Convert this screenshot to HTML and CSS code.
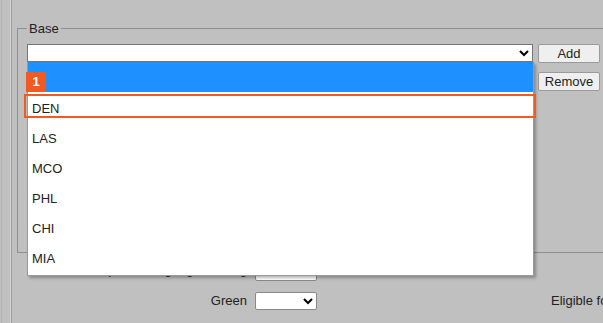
FILE: index.html
```html
<!DOCTYPE html>
<html lang="en">
<head>
    <meta charset="UTF-8">
    <title>Base Assignment</title>
    <link rel="stylesheet" href="styles.css">
</head>
<body>
    <div class="shell">
        <div class="page">
            <div class="panel">
                <fieldset class="base-box">
                    <legend>Base</legend>
                    <div class="base-row">
                        <div class="picker">
                            <select class="base-select">
                                <option></option>
                            </select>
                            <!-- open dropdown list -->
                            <div class="menu">
                                <div class="menu-item selected"></div>
                                <div class="menu-item">DEN</div>
                                <div class="menu-item">LAS</div>
                                <div class="menu-item">MCO</div>
                                <div class="menu-item">PHL</div>
                                <div class="menu-item">CHI</div>
                                <div class="menu-item">MIA</div>
                                <div class="step-badge">1</div>
                                <div class="step-outline"></div>
                            </div>
                        </div>
                        <div class="base-buttons">
                            <button class="btn">Add</button>
                            <button class="btn">Remove</button>
                        </div>
                    </div>
                </fieldset>

                <div class="form-grid">
                    <label class="form-label tucked">Spoken language training</label>
                    <input class="form-input" type="text">
                    <span></span>
                    <span></span>

                    <label class="form-label">Green</label>
                    <select class="form-select">
                        <option></option>
                    </select>
                    <span></span>
                    <label class="form-label left">Eligible for rehire</label>
                </div>
            </div>
        </div>
    </div>
</body>
</html>
```

FILE: styles.css
```css
html, body {
    margin: 0;
    padding: 0;
}
body {
    width: 603px;
    height: 323px;
    overflow: hidden;
    background: #c0c0c0;
    font-family: "Liberation Sans", Arial, sans-serif;
    font-size: 13px;
    color: #222;
}
.shell {
    margin-left: 1px;
    height: 323px;
    border-left: 1px solid #b2b2b2;
}
.page {
    margin-left: 8px;
    height: 323px;
    border-left: 1px solid #d6d6d6;
}
.panel {
    height: 323px;
    border-left: 1px solid #9c9c9c;
    padding: 21px 0 0 5px;
    box-sizing: border-box;
    overflow: hidden;
}
.base-box {
    margin: 0;
    width: 640px;
    height: 232px;
    box-sizing: border-box;
    border: 1px solid #8f8f8f;
    padding: 8px 0 0 9px;
}
.base-box legend {
    padding: 0 2px;
    margin-left: 0;
    font-size: 13px;
    color: #222;
}
.base-row {
    display: flex;
    align-items: flex-start;
    gap: 5px;
}
.picker {
    position: relative;
    width: 506px;
}
.base-select {
    display: block;
    width: 506px;
    height: 18px;
    margin: 0;
    font-family: inherit;
    font-size: 13px;
    background: #fff;
}
.menu {
    position: absolute;
    top: 100%;
    left: 0;
    width: 505px;
    height: 213px;
    background: #fff;
    border: 1px solid #9a9a9a;
    border-top: 0;
    box-shadow: 2px 2px 3px rgba(0, 0, 0, 0.3);
    z-index: 5;
}
.menu-item {
    height: 30px;
    box-sizing: border-box;
    padding: 4px 0 0 4px;
    line-height: 26px;
    color: #222;
}
.menu-item.selected {
    background: #1e90ff;
}
.step-badge {
    position: absolute;
    left: -2px;
    top: 10px;
    width: 20px;
    height: 20px;
    line-height: 20px;
    text-align: center;
    background: #f15a22;
    color: #fff;
    font-weight: 700;
    font-size: 13px;
}
.step-outline {
    position: absolute;
    left: -4px;
    top: 32px;
    width: 512px;
    height: 24px;
    box-sizing: border-box;
    border: 2px solid #f15a22;
}
.base-buttons {
    display: flex;
    flex-direction: column;
    gap: 9px;
}
.btn {
    width: 62px;
    height: 19px;
    padding: 0;
    font-family: inherit;
    font-size: 13px;
    color: #222;
    background: #efefef;
    border: 1px solid #9a9a9a;
    border-radius: 2px;
}
.form-grid {
    display: grid;
    grid-template-columns: 230px 62px 218px 60px;
    column-gap: 8px;
    row-gap: 11px;
    margin-top: 11px;
    white-space: nowrap;
}
.form-label {
    text-align: right;
    line-height: 17px;
}
.form-label.tucked {
    line-height: 12px;
}
.form-label.left {
    text-align: left;
    overflow: hidden;
}
.form-input,
.form-select {
    width: 62px;
    height: 17px;
    margin: 0;
    box-sizing: border-box;
    font-family: inherit;
    font-size: 12px;
    background: #fff;
    border: 1px solid #8a8a8a;
    border-radius: 2px;
}
.form-select {
    height: 18px;
}
```
